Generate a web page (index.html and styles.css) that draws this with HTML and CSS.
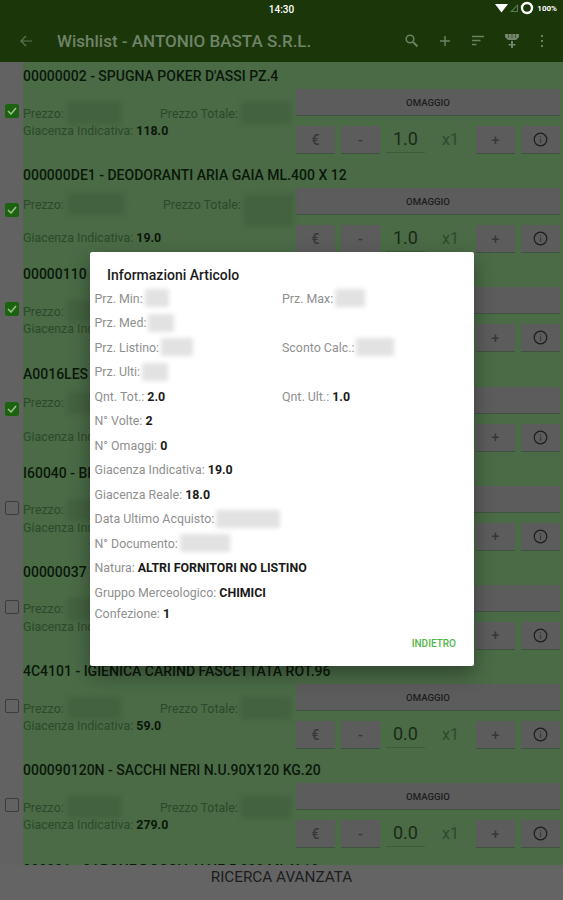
FILE: index.html
```html
<!DOCTYPE html>
<html lang="it">
<head>
  <meta charset="UTF-8">
  <title>Wishlist</title>
  <link rel="stylesheet" href="styles.css">
</head>
<body>
  <div class="screen">
    <div class="status-bar">
      <span class="clock">14:30</span>
      <div class="status-right">
        <svg width="13" height="10" viewBox="0 0 13 10"><path d="M0 1h13L6.500 9.500z" fill="#fff"/></svg>
        <svg width="10" height="10" viewBox="0 0 10 10"><path d="M9 1v8H1zM8 3.500L3.500 8H8z" fill="#5c7a50" fill-rule="evenodd"/></svg>
        <svg width="14" height="14" viewBox="0 0 14 14"><circle cx="7" cy="7" r="5" fill="none" stroke="#fff" stroke-width="2.400"/></svg>
        <span class="battery">100%</span>
      </div>
    </div>

    <header class="toolbar">
      <svg class="back" width="14" height="14" viewBox="0 0 14 14"><path d="M13 7H2M7 2L2 7l5 5" fill="none" stroke="#5f7556" stroke-width="1.200"/></svg>
      <h1 class="toolbar-title">Wishlist - ANTONIO BASTA S.R.L.</h1>
      <div class="toolbar-icons">
        <svg width="16" height="16" viewBox="0 0 16 16"><circle cx="6" cy="6" r="3.800" fill="none" stroke="#6c8062" stroke-width="1.600"/><path d="M9 9l4.500 4.500" stroke="#6c8062" stroke-width="2"/></svg>
        <svg width="16" height="16" viewBox="0 0 16 16"><path d="M8 3v10M3 8h10" stroke="#6c8062" stroke-width="1.500"/></svg>
        <svg width="16" height="16" viewBox="0 0 16 16"><path d="M2 3.500h12M2 7.500h8.500M2 11.500h4.500" stroke="#6c8062" stroke-width="1.300"/></svg>
        <svg class="ico-filter" width="16" height="18" viewBox="0 0 16 18"><path d="M1 2h14v3l-3 3H4L1 5zM7 9h2v3h2.500v1.500H9V16H7v-2.500H4.500V12H7z" fill="#75866d"/><path d="M4.500 2v4M8 2v4M11.500 2v4" stroke="#34502a" stroke-width=".8"/></svg>
        <svg class="ico-more" width="4" height="16" viewBox="0 0 4 16"><path d="M2 2v2M2 7v2M2 12v2" stroke="#6c8062" stroke-width="2"/></svg>
      </div>
    </header>

    <main class="list">
      <article class="row">
        <div class="gutter"><span class="check on"><svg width="10" height="8" viewBox="0 0 10 8"><path d="M1 4l3 3 5-6" fill="none" stroke="#9fbf8f" stroke-width="1.500"/></svg></span></div>
        <div class="content">
          <h2 class="title">00000002 - SPUGNA POKER D'ASSI PZ.4</h2>
          <div class="body">
            <div class="info">
              <div class="prices">
                <div class="price p1"><span>Prezzo:</span><i class="smudge s55"></i></div>
                <div class="price"><span>Prezzo Totale:</span><i class="smudge s50"></i></div>
              </div>
              <div class="stock">Giacenza Indicativa: <b>118.0</b></div>
            </div>
            <div class="controls">
              <button class="gift">OMAGGIO</button>
              <div class="qty-bar">
                <button class="small">€</button>
                <button class="small">-</button>
                <span class="qty">1.0</span>
                <span class="mult">x1</span>
                <button class="small">+</button>
                <button class="small"><svg width="15" height="15" viewBox="0 0 15 15"><circle cx="7.500" cy="7.500" r="6.300" fill="none" stroke="#1d1d1d" stroke-width="1.200"/><path d="M7.500 6.500v4.500M7.500 4v1.300" stroke="#3a3a3a" stroke-width="1.200"/></svg></button>
              </div>
            </div>
          </div>
        </div>
      </article>

      <article class="row">
        <div class="gutter"><span class="check on"><svg width="10" height="8" viewBox="0 0 10 8"><path d="M1 4l3 3 5-6" fill="none" stroke="#9fbf8f" stroke-width="1.500"/></svg></span></div>
        <div class="content">
          <h2 class="title">000000DE1 - DEODORANTI ARIA GAIA ML.400 X 12</h2>
          <div class="body">
            <div class="info tall">
              <div class="prices">
                <div class="price p2"><span>Prezzo:</span><i class="smudge s60"></i></div>
                <div class="price"><span>Prezzo Totale:</span><i class="smudge s50 high"></i></div>
              </div>
              <div class="stock">Giacenza Indicativa: <b>19.0</b></div>
            </div>
            <div class="controls">
              <button class="gift">OMAGGIO</button>
              <div class="qty-bar">
                <button class="small">€</button>
                <button class="small">-</button>
                <span class="qty">1.0</span>
                <span class="mult">x1</span>
                <button class="small">+</button>
                <button class="small"><svg width="15" height="15" viewBox="0 0 15 15"><circle cx="7.500" cy="7.500" r="6.300" fill="none" stroke="#1d1d1d" stroke-width="1.200"/><path d="M7.500 6.500v4.500M7.500 4v1.300" stroke="#3a3a3a" stroke-width="1.200"/></svg></button>
              </div>
            </div>
          </div>
        </div>
      </article>

      <article class="row">
        <div class="gutter"><span class="check on"><svg width="10" height="8" viewBox="0 0 10 8"><path d="M1 4l3 3 5-6" fill="none" stroke="#9fbf8f" stroke-width="1.500"/></svg></span></div>
        <div class="content">
          <h2 class="title">00000110 - CARTA</h2>
          <div class="body">
            <div class="info">
              <div class="prices">
                <div class="price p1"><span>Prezzo:</span><i class="smudge s55"></i></div>
                <div class="price"><span>Prezzo Totale:</span><i class="smudge s50"></i></div>
              </div>
              <div class="stock">Giacenza Indicativa: <b>1.0</b></div>
            </div>
            <div class="controls">
              <button class="gift">OMAGGIO</button>
              <div class="qty-bar">
                <button class="small">€</button>
                <button class="small">-</button>
                <span class="qty">1.0</span>
                <span class="mult">x1</span>
                <button class="small">+</button>
                <button class="small"><svg width="15" height="15" viewBox="0 0 15 15"><circle cx="7.500" cy="7.500" r="6.300" fill="none" stroke="#1d1d1d" stroke-width="1.200"/><path d="M7.500 6.500v4.500M7.500 4v1.300" stroke="#3a3a3a" stroke-width="1.200"/></svg></button>
              </div>
            </div>
          </div>
        </div>
      </article>

      <article class="row">
        <div class="gutter"><span class="check on"><svg width="10" height="8" viewBox="0 0 10 8"><path d="M1 4l3 3 5-6" fill="none" stroke="#9fbf8f" stroke-width="1.500"/></svg></span></div>
        <div class="content">
          <h2 class="title">A0016LES - GUANTI</h2>
          <div class="body">
            <div class="info tall">
              <div class="prices">
                <div class="price p1"><span>Prezzo:</span><i class="smudge s55"></i></div>
                <div class="price"><span>Prezzo Totale:</span><i class="smudge s50"></i></div>
              </div>
              <div class="stock">Giacenza Indicativa: <b>4.0</b></div>
            </div>
            <div class="controls">
              <button class="gift">OMAGGIO</button>
              <div class="qty-bar">
                <button class="small">€</button>
                <button class="small">-</button>
                <span class="qty">1.0</span>
                <span class="mult">x1</span>
                <button class="small">+</button>
                <button class="small"><svg width="15" height="15" viewBox="0 0 15 15"><circle cx="7.500" cy="7.500" r="6.300" fill="none" stroke="#1d1d1d" stroke-width="1.200"/><path d="M7.500 6.500v4.500M7.500 4v1.300" stroke="#3a3a3a" stroke-width="1.200"/></svg></button>
              </div>
            </div>
          </div>
        </div>
      </article>

      <article class="row">
        <div class="gutter"><span class="check"></span></div>
        <div class="content">
          <h2 class="title">I60040 - BICCHIERI</h2>
          <div class="body">
            <div class="info">
              <div class="prices">
                <div class="price p1"><span>Prezzo:</span><i class="smudge s55"></i></div>
                <div class="price"><span>Prezzo Totale:</span><i class="smudge s50"></i></div>
              </div>
              <div class="stock">Giacenza Indicativa: <b>8.0</b></div>
            </div>
            <div class="controls">
              <button class="gift">OMAGGIO</button>
              <div class="qty-bar">
                <button class="small">€</button>
                <button class="small">-</button>
                <span class="qty">0.0</span>
                <span class="mult">x1</span>
                <button class="small">+</button>
                <button class="small"><svg width="15" height="15" viewBox="0 0 15 15"><circle cx="7.500" cy="7.500" r="6.300" fill="none" stroke="#1d1d1d" stroke-width="1.200"/><path d="M7.500 6.500v4.500M7.500 4v1.300" stroke="#3a3a3a" stroke-width="1.200"/></svg></button>
              </div>
            </div>
          </div>
        </div>
      </article>

      <article class="row">
        <div class="gutter"><span class="check"></span></div>
        <div class="content">
          <h2 class="title">00000037 - SPUGNE</h2>
          <div class="body">
            <div class="info">
              <div class="prices">
                <div class="price p1"><span>Prezzo:</span><i class="smudge s55"></i></div>
                <div class="price"><span>Prezzo Totale:</span><i class="smudge s50"></i></div>
              </div>
              <div class="stock">Giacenza Indicativa: <b>12.0</b></div>
            </div>
            <div class="controls">
              <button class="gift">OMAGGIO</button>
              <div class="qty-bar">
                <button class="small">€</button>
                <button class="small">-</button>
                <span class="qty">0.0</span>
                <span class="mult">x1</span>
                <button class="small">+</button>
                <button class="small"><svg width="15" height="15" viewBox="0 0 15 15"><circle cx="7.500" cy="7.500" r="6.300" fill="none" stroke="#1d1d1d" stroke-width="1.200"/><path d="M7.500 6.500v4.500M7.500 4v1.300" stroke="#3a3a3a" stroke-width="1.200"/></svg></button>
              </div>
            </div>
          </div>
        </div>
      </article>

      <article class="row">
        <div class="gutter"><span class="check"></span></div>
        <div class="content">
          <h2 class="title">4C4101 - IGIENICA CARIND FASCETTATA ROT.96</h2>
          <div class="body">
            <div class="info">
              <div class="prices">
                <div class="price p1"><span>Prezzo:</span><i class="smudge s55"></i></div>
                <div class="price"><span>Prezzo Totale:</span><i class="smudge s50"></i></div>
              </div>
              <div class="stock">Giacenza Indicativa: <b>59.0</b></div>
            </div>
            <div class="controls">
              <button class="gift">OMAGGIO</button>
              <div class="qty-bar">
                <button class="small">€</button>
                <button class="small">-</button>
                <span class="qty">0.0</span>
                <span class="mult">x1</span>
                <button class="small">+</button>
                <button class="small"><svg width="15" height="15" viewBox="0 0 15 15"><circle cx="7.500" cy="7.500" r="6.300" fill="none" stroke="#1d1d1d" stroke-width="1.200"/><path d="M7.500 6.500v4.500M7.500 4v1.300" stroke="#3a3a3a" stroke-width="1.200"/></svg></button>
              </div>
            </div>
          </div>
        </div>
      </article>

      <article class="row">
        <div class="gutter"><span class="check"></span></div>
        <div class="content">
          <h2 class="title">000090120N - SACCHI NERI N.U.90X120 KG.20</h2>
          <div class="body">
            <div class="info">
              <div class="prices">
                <div class="price p1"><span>Prezzo:</span><i class="smudge s55"></i></div>
                <div class="price"><span>Prezzo Totale:</span><i class="smudge s50"></i></div>
              </div>
              <div class="stock">Giacenza Indicativa: <b>279.0</b></div>
            </div>
            <div class="controls">
              <button class="gift">OMAGGIO</button>
              <div class="qty-bar">
                <button class="small">€</button>
                <button class="small">-</button>
                <span class="qty">0.0</span>
                <span class="mult">x1</span>
                <button class="small">+</button>
                <button class="small"><svg width="15" height="15" viewBox="0 0 15 15"><circle cx="7.500" cy="7.500" r="6.300" fill="none" stroke="#1d1d1d" stroke-width="1.200"/><path d="M7.500 6.500v4.500M7.500 4v1.300" stroke="#3a3a3a" stroke-width="1.200"/></svg></button>
              </div>
            </div>
          </div>
        </div>
      </article>

      <article class="row">
        <div class="gutter"></div>
        <div class="content">
          <h2 class="title">000091 - SAPONE DOCCIA NAIF 5 300 ML X 12</h2>
        </div>
      </article>
    </main>

    <footer class="search-bar">RICERCA AVANZATA</footer>

    <!-- dialog over the dimmed list -->
    <section class="dialog">
      <h3 class="dialog-title">Informazioni Articolo</h3>
      <div class="facts">
        <div class="fact">Prz. Min:<i class="smudge light w26"></i></div>
        <div class="fact">Prz. Max:<i class="smudge light w32"></i></div>
        <div class="fact">Prz. Med:<i class="smudge light w28"></i></div>
        <div class="fact"></div>
        <div class="fact">Prz. Listino:<i class="smudge light w34"></i></div>
        <div class="fact">Sconto Calc.:<i class="smudge light w40"></i></div>
        <div class="fact">Prz. Ulti:<i class="smudge light w28"></i></div>
        <div class="fact"></div>
        <div class="fact">Qnt. Tot.: <b>2.0</b></div>
        <div class="fact">Qnt. Ult.: <b>1.0</b></div>
        <div class="fact wide">N° Volte: <b>2</b></div>
        <div class="fact wide">N° Omaggi: <b>0</b></div>
        <div class="fact wide">Giacenza Indicativa: <b>19.0</b></div>
        <div class="fact wide">Giacenza Reale: <b>18.0</b></div>
        <div class="fact wide">Data Ultimo Acquisto:<i class="smudge light w66"></i></div>
        <div class="fact wide">N° Documento:<i class="smudge light w52"></i></div>
        <div class="fact wide">Natura: <b>ALTRI FORNITORI NO LISTINO</b></div>
        <div class="fact wide">Gruppo Merceologico: <b>CHIMICI</b></div>
        <div class="fact wide last">Confezione: <b>1</b></div>
      </div>
      <div class="dialog-actions"><button class="back-btn">INDIETRO</button></div>
    </section>
  </div>
</body>
</html>
```

FILE: styles.css
```css
* {
  box-sizing: border-box;
}

html, body {
  margin: 0;
  height: 100%;
}

body {
  font-family: Roboto, "Liberation Sans", sans-serif;
}

.screen {
  position: relative;
  width: 563px;
  height: 900px;
  display: flex;
  flex-direction: column;
  overflow: hidden;
  background: #4a6b46;
}

/* top bars */
.status-bar {
  flex: 0 0 19px;
  display: flex;
  justify-content: center;
  align-items: center;
  position: relative;
  background: #1b3609;
  color: #fff;
}

.clock {
  font-size: 10px;
  font-weight: 500;
}

.status-right {
  position: absolute;
  right: 6px;
  top: 1px;
  display: flex;
  align-items: center;
  gap: 1px;
}

.battery {
  margin-left: 2px;
  font-size: 8px;
  font-weight: 700;
}

.toolbar {
  flex: 0 0 43px;
  display: flex;
  align-items: center;
  padding: 0 19px 0 19px;
  background: #1b3609;
}

.toolbar-title {
  margin: 0 0 0 24px;
  flex: 1;
  font-size: 17px;
  font-weight: 500;
  color: #6f8368;
}

.toolbar-icons {
  display: flex;
  align-items: center;
  gap: 17px;
}

.ico-filter {
  margin-left: 1px;
}

.ico-more {
  margin-left: 3px;
}

/* list */
.list {
  flex: 1;
  min-height: 0;
  overflow: hidden;
}

.row {
  display: flex;
  height: 99.2px;
}

.gutter {
  flex: 0 0 23px;
  padding: 42px 0 0 5px;
  background: #626262;
}

.check {
  display: block;
  width: 14px;
  height: 14px;
  border: 1.5px solid #3c3c3c;
  border-radius: 2px;
}

.check.on {
  display: flex;
  align-items: center;
  justify-content: center;
  background: #1c6310;
  border-color: #1c6310;
}

.content {
  flex: 1;
  min-width: 0;
}

.title {
  margin: 0;
  height: 27px;
  padding-top: 5px;
  font-size: 14px;
  line-height: 18px;
  font-weight: 500;
  color: #0c170b;
}

.body {
  display: flex;
  justify-content: space-between;
  padding-right: 3px;
}

.info {
  padding-top: 15px;
  font-size: 12.4px;
  color: #2a4a2b;
}

.prices {
  display: flex;
  height: 18px;
  align-items: center;
}

.info.tall {
  padding-top: 7px;
}

.info.tall .prices {
  margin-bottom: 16px;
}

.price {
  display: flex;
  align-items: center;
}

.price.p1 {
  width: 137px;
}

.price.p2 {
  width: 140px;
}

.stock {
  line-height: 18px;
}

.stock b {
  color: #0c170b;
  font-weight: 700;
}

.smudge {
  display: block;
  height: 22px;
  margin: -4px 0 -4px 3px;
  background: #43623f;
  filter: blur(2.5px);
}

.s50 { width: 50px; }
.s55 { width: 54px; }
.s60 { width: 58px; }
.s50.high { height: 32px; margin-top: 8px; }

.controls {
  flex: 0 0 264px;
}

.gift {
  display: block;
  width: 100%;
  height: 26px;
  border: 0;
  padding: 0;
  background: #5c5c5c;
  box-shadow: 0 1px 0 #3f5440;
  font: 500 9.6px Roboto, sans-serif;
  color: #1c1c1c;
}

.qty-bar {
  display: flex;
  align-items: center;
  margin-top: 11px;
  height: 27px;
}

.small {
  flex: 0 0 39px;
  height: 27px;
  margin-right: 6px;
  display: flex;
  align-items: center;
  justify-content: center;
  border: 0;
  padding: 0;
  background: #5c5c5c;
  box-shadow: 0 1px 0 #3f5440;
  font: 500 14px Roboto, sans-serif;
  color: #383838;
}

.small:last-child {
  margin-right: 0;
}

.qty {
  flex: 0 0 39px;
  height: 27px;
  border-bottom: 1px solid #3d5a3b;
  text-align: center;
  font-size: 18px;
  line-height: 26px;
  color: #1a2a18;
}

.mult {
  flex: 0 0 51px;
  text-align: center;
  font-size: 16px;
  color: #2e4a2e;
}

/* bottom bar */
.search-bar {
  flex: 0 0 35px;
  padding-top: 3px;
  text-align: center;
  font-size: 15.3px;
  line-height: 18px;
  color: #1d1d1d;
  background: #646464;
}

/* dialog */
.dialog {
  position: absolute;
  left: 90px;
  top: 252px;
  width: 384px;
  height: 414px;
  display: flex;
  flex-direction: column;
  background: #fff;
  border-radius: 2px;
  box-shadow: 0 8px 20px rgba(0,0,0,.35);
}

.dialog-title {
  margin: 15px 0 0 17px;
  font-size: 14px;
  line-height: 16px;
  font-weight: 500;
  color: #1c1c1c;
}

.facts {
  margin: 3px 0 0 4.5px;
  display: grid;
  grid-template-columns: 187.5px 1fr;
  grid-auto-rows: 24.5px;
  font-size: 12.4px;
  color: #8f8f8f;
}

.fact {
  display: flex;
  align-items: center;
  white-space: pre;
}

.fact.wide {
  grid-column: 1 / 3;
}

.fact.last {
  height: 18px;
  align-self: start;
}

.fact b {
  font-weight: 700;
  color: #1a1a1a;
}

.smudge.light {
  margin: 0 0 0 2px;
  height: 18px;
  background: #e2e2e2;
  filter: blur(2px);
}

.w26 { width: 24px; }
.w28 { width: 26px; }
.w32 { width: 30px; }
.w34 { width: 32px; }
.w40 { width: 38px; }
.w52 { width: 50px; }
.w66 { width: 64px; }

.dialog-actions {
  margin-top: auto;
  padding: 0 18px 15px 0;
  text-align: right;
}

.back-btn {
  border: 0;
  padding: 0;
  background: none;
  font: 500 10px Roboto, sans-serif;
  color: #52b548;
}
```
